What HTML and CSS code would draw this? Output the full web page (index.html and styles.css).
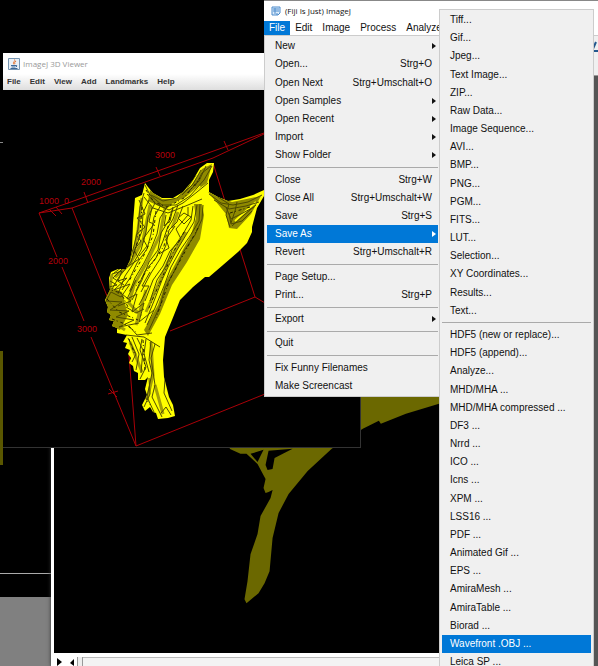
FILE: index.html
```html
<!DOCTYPE html>
<html lang="en">
<head>
<meta charset="utf-8">
<title>ImageJ</title>
<link rel="stylesheet" href="styles.css">
</head>
<body>
<main class="desktop">
  <div class="back-window"><span class="edge-mark"></span><span class="edge-olive"></span></div>

  <section class="image-window" aria-label="Image">
    <svg class="slice" viewBox="54 120 384 533" preserveAspectRatio="xMinYMin slice" aria-hidden="true">
      <path fill="#6b6800" d="M229 448L240 453H246L257 463L265 478L263 487L265 492L268 491L272 489L270 497L260 515L257 533L250 553L247 580L244 598L246 602L258 592L264 582L269 570L272 537L278 512L288 493L307 470L331 448L362 428L378 420L380 423L405 413L438 403V380H300Z"/>
      <path d="M250 453L263 449L257 461ZM268 450L292 448L274 457L272 468L267 469L265 464Z"/>
    </svg>
    <div class="slice-bar">
      <button class="mini" aria-label="Play"><svg viewBox="0 0 6 8"><path d="M1 0L6 4L1 8Z"/></svg></button>
      <button class="mini" aria-label="Previous"><svg viewBox="0 0 6 8"><path d="M5 1L1 5L5 8Z"/></svg></button>
      <span class="thumb"></span><span class="track"></span>
    </div>
  </section>

  <section class="viewer" aria-label="3D Viewer">
    <header class="viewer-title">
      <svg class="java" viewBox="0 0 12 12" aria-hidden="true"><path fill="#e8f0f7" stroke="#7695b1" d="M.5.5h11v11H.5z"/><path fill="none" stroke="#e57530" d="M6.5 1.5C8 3 4 4 6 6.500M8 3Q5.500 5 7 6"/><path fill="none" stroke="#3c6998" d="M3 7.500h5M3.500 9h4M2.500 10.500h7M8 7.500q2 0 0 1.500"/></svg>
      <span>ImageJ 3D Viewer</span>
    </header>
    <nav class="viewer-menu">
      <button>File</button><button>Edit</button><button>View</button><button>Add</button><button>Landmarks</button><button>Help</button>
    </nav>
    <svg class="scene" viewBox="3 90 358 357" preserveAspectRatio="xMinYMin slice" role="img" aria-label="Surface model">
      <defs>
        <clipPath id="bone"><path d="M145 183L148 187L153 193L162 198L173 198L183 192L193 180L200 168L207 163L214 163L213 172L209 180V192L218 197L228 201L240 199L253 195L264 190V196L257 208L252 227V232L247 243L238 252L223 265L209 277L205 277L193 287L180 300L172 320L165 337L163 360L164 377L169 397L173 405L175 416L168 418L158 419L156 413L153 412L150 407L145 411L142 405L147 395L145 389L148 377L145 380H138V373L134 371L133 366L129 363L131 358L128 354L130 350L125 348L127 343L123 342L127 335L117 333V328L112 326L114 321L109 320L111 315L107 312L108 307L105 300L110 290L109 278L111 272L118 269H126L130 260L132 250L133 223L135 198L142 195Z"/></clipPath>
      </defs>
      <g fill="none" stroke="#a90008">
        <path d="M39 213L68 203L264 133M39 213L72 208L213 158L264 134M39 213L57 257M62 267L84 321M91 337L136 446M72 208L107 296M129 355L136 446L270 392M213 163L255 297L170 331M255 297L270 306"/>
        <path d="M84 192L88 203M156 167L160 176M224 141L228 150M108 394L118 391M109 389L117 397M49 209L56 216M56 207L62 214"/>
      </g>
      <g class="ticks"><text x="155" y="158">3000</text><text x="81" y="185">2000</text><text x="39" y="204">1000</text><text x="64" y="204">0</text><text x="48" y="264">2000</text><text x="77" y="332">3000</text></g>
      <path fill="#ff0" d="M145 183L148 187L153 193L162 198L173 198L183 192L193 180L200 168L207 163L214 163L213 172L209 180V192L218 197L228 201L240 199L253 195L264 190V196L257 208L252 227V232L247 243L238 252L223 265L209 277L205 277L193 287L180 300L172 320L165 337L163 360L164 377L169 397L173 405L175 416L168 418L158 419L156 413L153 412L150 407L145 411L142 405L147 395L145 389L148 377L145 380H138V373L134 371L133 366L129 363L131 358L128 354L130 350L125 348L127 343L123 342L127 335L117 333V328L112 326L114 321L109 320L111 315L107 312L108 307L105 300L110 290L109 278L111 272L118 269H126L130 260L132 250L133 223L135 198L142 195Z"/>
      <g clip-path="url(#bone)" fill="none" stroke="#a39e08" stroke-width="3">
        <path d="M142 198L138 230L133 258M150 205L143 240L130 264L115 277M165 208L160 235L147 262L130 292M178 212L172 228M186 232L168 262L158 285L146 312M112 274L108 300L113 322L125 330M135 282L129 303L141 316M146 290L136 325M130 342L142 372M151 342L153 375L147 400M155 385L163 414"/>
      </g>
      <g clip-path="url(#bone)" fill="none" stroke="#4d4a00">
        <path fill="#8f8a00" stroke="none" d="M194 204L202 204L204 215L200 239L187 262L172 285L160 314L148 336L144 330L158 305L166 281L179 257L191 235L196 218ZM105 285L122 292L128 315L120 330L107 325ZM208 192L232 202L261 196L251 214L237 229L229 228L226 214ZM150 190L162 199L176 199L190 187L202 169L212 164L207 183L187 197L165 209L148 201Z"/>
        <path stroke="#ff0" stroke-width="2" d="M158 212L170 211L190 203L206 194M235 221L256 202M200 186L186 198L172 205"/>
        <path d="M145 185L150 195L162 205L176 205L190 196L204 180L212 166M147 194L156 204L169 210L183 203L197 192L208 183M144 197L153 208L168 213L188 205L202 199M196 175L187 189L177 198L163 201L151 195M201 170L193 184L182 195M206 166L199 181L187 193M211 166L202 173L195 186M209 194L221 203L233 205L248 202L262 195M214 200L229 209L246 206L259 202M226 207L231 219L241 214L254 207M229 213L231 224L242 221L252 211M232 226L244 215L256 205M237 202L235 211L231 223M218 197L229 204L226 215L230 227"/>
        <path d="M203 205L202 219L195 235L184 251L175 270L165 288L160 306L149 330M200 204L199 221L190 236L181 249L171 267L164 286L155 308L147 325M197 205L194 222L186 235L177 250L169 265L162 280L154 301L145 323M193 206L191 220L183 234L172 250L166 266L157 280L150 301M188 207L188 215L176 229L181 239L170 251L163 266L153 280L145 301M183 206L177 222L169 230L166 245L160 259L151 273L141 292M178 205L173 219L167 229L163 241L156 258L145 271L136 291M173 207L169 220L161 233L158 250L149 262L142 280L132 300M167 207L160 218L157 234L151 249L144 263L135 278L130 291M161 205L154 217L151 234L147 249L137 263L130 278L122 290M155 203L148 217L146 232L141 250L133 264L125 276L118 294M149 200L143 213L142 231L136 247L131 262L119 277L112 289M144 193L140 207L138 229L134 246L129 262L114 273"/>
        <path d="M139 200L145 214L137 218L145 227L136 235L141 241L134 250L139 259L127 267M152 207L149 222L154 224L143 239L147 246L139 256M166 215L164 226L170 221L173 208M178 218L184 224L191 217L184 213ZM175 226L166 239L169 248L159 254M112 274L122 271L118 281L127 278L114 290L130 284L121 297L111 292L106 301L122 302L110 310L129 311L116 317L134 320L119 327L139 323M136 280L127 299L137 294L132 312L144 303L139 322L154 310M150 272L142 286L149 286L139 305M110 281L117 285L109 287M123 268L113 278L124 285M118 291L131 301L118 306M129 326L137 335L152 333M126 335L144 337L160 347M126 307L136 313L144 309"/>
        <path d="M128 338L136 354L132 362M132 337L139 354L136 370M137 338L143 350L141 373M142 339L140 350L146 367L140 379M146 339L144 354L149 372M151 341L149 360L152 373L147 397L154 412M155 344L151 358L155 385L152 397L162 417M149 378L150 394L144 407M165 379L164 393L172 411M161 413L166 407L171 415"/>
      </g>
      <g clip-path="url(#bone)" fill="none" stroke="#222000" stroke-dasharray="3 2 1 3">
        <path d="M146 190L154 202L167 207L184 198L200 178M142 207L140 234L132 258M156 211L153 236L143 257L129 281M170 217L164 246L151 265L136 286M184 232L173 253L161 280L148 310M198 228L181 259L170 279L156 318M107 289L121 293L128 307M107 299L119 312L138 320M112 319L125 324L136 332M129 339L135 355M143 340L145 371M230 213L250 207M145 397L150 405"/>
      </g>
    </svg>
  </section>

  <section class="fiji" aria-label="(Fiji Is Just) ImageJ">
    <header class="fiji-title">
      <svg class="fiji-icon" viewBox="0 0 10 10" aria-hidden="true"><path fill="#dcecfb" stroke="#4c8bcb" d="M1 1h8v6L7 9H1z"/><path stroke="#4c8bcb" d="M2 3h6M2 5h6M4 2v6M6 7v2"/></svg>
      <span>(Fiji Is Just) ImageJ</span>
    </header>
    <nav class="fiji-menu">
      <button class="open">File</button><button>Edit</button><button>Image</button><button>Process</button><button>Analyze</button>
    </nav>
    <div class="toolbar"><svg viewBox="0 0 8 12" aria-hidden="true"><path d="M2 10L6 1M4 10H8" fill="none" stroke="#24588d" stroke-width="2"/></svg></div>
  </section>

  <ul class="menu file-menu">
    <li><button>New<i></i></button></li>
    <li><button>Open...<span>Strg+O</span></button></li>
    <li><button>Open Next<span>Strg+Umschalt+O</span></button></li>
    <li><button>Open Samples<i></i></button></li>
    <li><button>Open Recent<i></i></button></li>
    <li><button>Import<i></i></button></li>
    <li><button>Show Folder<i></i></button></li>
    <li class="rule"></li>
    <li><button>Close<span>Strg+W</span></button></li>
    <li><button>Close All<span>Strg+Umschalt+W</span></button></li>
    <li><button>Save<span>Strg+S</span></button></li>
    <li><button class="active">Save As<i></i></button></li>
    <li><button>Revert<span>Strg+Umschalt+R</span></button></li>
    <li class="rule"></li>
    <li><button>Page Setup...</button></li>
    <li><button>Print...<span>Strg+P</span></button></li>
    <li class="rule"></li>
    <li><button>Export<i></i></button></li>
    <li class="rule"></li>
    <li><button>Quit</button></li>
    <li class="rule"></li>
    <li><button>Fix Funny Filenames</button></li>
    <li><button>Make Screencast</button></li>
  </ul>

  <ul class="menu save-menu">
    <li><button>Tiff...</button></li>
    <li><button>Gif...</button></li>
    <li><button>Jpeg...</button></li>
    <li><button>Text Image...</button></li>
    <li><button>ZIP...</button></li>
    <li><button>Raw Data...</button></li>
    <li><button>Image Sequence...</button></li>
    <li><button>AVI...</button></li>
    <li><button>BMP...</button></li>
    <li><button>PNG...</button></li>
    <li><button>PGM...</button></li>
    <li><button>FITS...</button></li>
    <li><button>LUT...</button></li>
    <li><button>Selection...</button></li>
    <li><button>XY Coordinates...</button></li>
    <li><button>Results...</button></li>
    <li><button>Text...</button></li>
    <li class="rule"></li>
    <li><button>HDF5 (new or replace)...</button></li>
    <li><button>HDF5 (append)...</button></li>
    <li><button>Analyze...</button></li>
    <li><button>MHD/MHA ...</button></li>
    <li><button>MHD/MHA compressed ...</button></li>
    <li><button>DF3 ...</button></li>
    <li><button>Nrrd ...</button></li>
    <li><button>ICO ...</button></li>
    <li><button>Icns ...</button></li>
    <li><button>XPM ...</button></li>
    <li><button>LSS16 ...</button></li>
    <li><button>PDF ...</button></li>
    <li><button>Animated Gif ...</button></li>
    <li><button>EPS ...</button></li>
    <li><button>AmiraMesh ...</button></li>
    <li><button>AmiraTable ...</button></li>
    <li><button>Biorad ...</button></li>
    <li><button class="active">Wavefront .OBJ ...</button></li>
    <li><button>Leica SP ...</button></li>
  </ul>
</main>
</body>
</html>
```
FILE: styles.css
```css
* { box-sizing: border-box; }
body { margin: 0; background: #555; font: 10px/14px "Liberation Sans", Arial, sans-serif; color: #111; }
button { border: 0; padding: 0; margin: 0; background: none; font: inherit; color: inherit; white-space: pre; text-align: left; }
svg { display: block; }

.desktop { position: relative; height: 100vh; overflow: hidden; background: #555; }

.back-window { position: absolute; inset: 0 160px 69px 0; background: #000; box-shadow: 0 69px 0 #808080; }
.back-window::after { content: ""; position: absolute; left: 0; right: 0; bottom: 23px; height: 1px; background: #aaa; }
.edge-mark { position: absolute; left: 0; top: 142px; width: 3px; height: 1px; background: #888; }
.edge-olive { position: absolute; left: 0; top: 351px; width: 3px; height: 114px; background: #5a5700; }

.image-window { position: absolute; left: 51px; top: 120px; bottom: 0; width: 388px; display: flex; flex-direction: column; background: #fff; padding-left: 3px; box-shadow: 0 0 4px #333; }
.slice { flex: 1; min-height: 0; width: 100%; background: #000; }
.slice-bar { display: flex; align-items: stretch; height: 13px; padding-top: 4px; gap: 4px; }
.mini { width: 9px; padding: 1px 2px; }
.mini svg { width: 6px; height: 8px; }
.thumb { width: 6px; background: #eee; border: solid #999; border-width: 0 1px; margin-left: -3px; }
.track { flex: 1; margin-left: -4px; background: #f3f3f3; border-top: 1px solid #bbb; }

.viewer { position: absolute; left: 3px; top: 53px; width: 358px; height: 395px; display: flex; flex-direction: column; background: #000; border-bottom: 1px solid #333; border-right: 1px solid #333; }
.viewer-title { display: flex; align-items: center; gap: 3px; height: 21px; padding-left: 5px; background: #fff; color: #999; font: 8px/12px "Open Sans", sans-serif; }
.java { width: 12px; height: 12px; }
.viewer-menu { display: flex; align-items: center; gap: 9px; height: 16px; padding-left: 4px; background: linear-gradient(#fff, #dedede); color: #333; font-size: 8px; font-weight: bold; }
.scene { flex: 1; min-height: 0; width: 100%; }
.ticks { fill: #b5000b; font-size: 9px; }

.fiji { position: absolute; left: 264px; top: 0; right: 0; height: 76px; display: flex; flex-direction: column; background: #f0f0f0; border-top: 1px solid #888; border-bottom: 1px solid #999; }
.fiji-title { display: flex; align-items: center; gap: 4px; height: 20px; padding-left: 7px; background: #fff; font: 8px/12px "Open Sans", sans-serif; }
.fiji-icon { width: 10px; height: 10px; }
.fiji-menu { display: flex; height: 14px; background: #fff; }
.fiji-menu button { padding: 0 5px; }
.fiji-menu .open { background: #0078d7; color: #fff; }
.toolbar { flex: 1; display: flex; justify-content: flex-end; align-items: flex-start; padding-top: 5px; border-top: 1px solid #ccc; }
.toolbar svg { width: 8px; height: 12px; }

.menu { position: absolute; display: flex; flex-direction: column; margin: 0; padding: 1px 2px; list-style: none; background: #f0f0f0; border: 1px solid #ccc; }
.menu li { flex: 3 1 0; min-height: 0; display: flex; }
.menu button { flex: 1; display: flex; align-items: center; padding: 0 6px 0 8px; }
.menu .active { background: #0078d7; color: #fff; }
.menu .rule { flex: 1 1 0; align-items: center; }
.menu .rule::before { content: ""; flex: 1; height: 1px; background: #aaa; }
.menu span { margin-left: auto; }
.menu i { margin: 0 -4px 0 auto; border: 3px solid transparent; border-left: 4px solid currentColor; border-right: 0; }
.file-menu { left: 264px; top: 35px; width: 177px; height: 362px; }
.save-menu { left: 439px; top: 9px; width: 155px; height: 664px; }
```
